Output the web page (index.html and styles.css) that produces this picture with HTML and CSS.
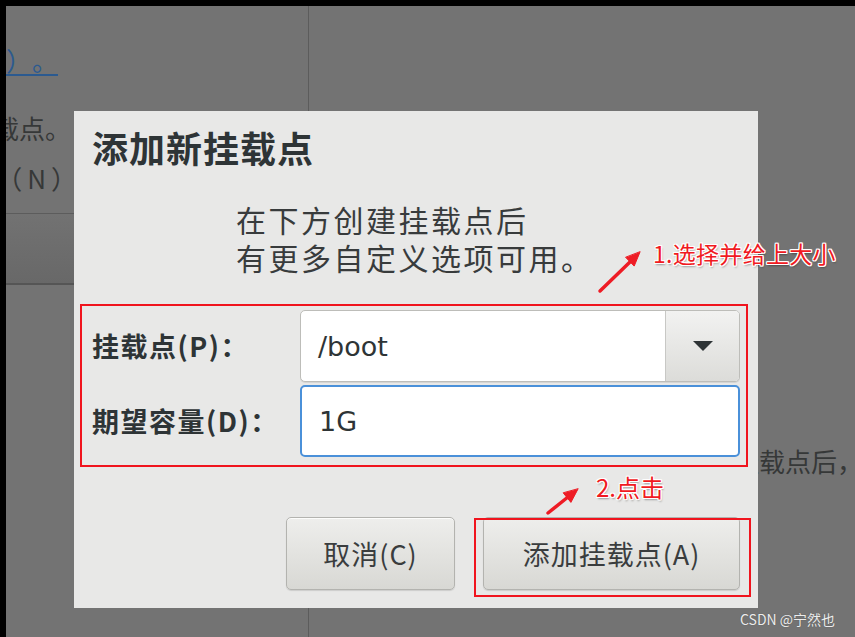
FILE: index.html
```html
<!DOCTYPE html>
<html lang="zh-CN">
<head>
<meta charset="utf-8">
<title>添加新挂载点</title>
<link rel="stylesheet" href="styles.css">
</head>
<body>
  <div class="screen">
    <div class="left-pane">
      <div class="bg-line line-a"><span><a class="bg-link">点这里自动创建它们（C）。</a></span></div>
      <div class="bg-line line-b"><span>通过点击'+'按钮创建新挂载点。</span></div>
      <div class="bg-line line-c"><span class="paren">（N）</span></div>
      <div class="bg-combo"></div>
    </div>
    <div class="right-pane">
      <div class="bg-text">安装创建挂载点后，您可以在这里浏览它们的详细信息。</div>
    </div>
  </div>

  <div class="dialog">
    <h1 class="dialog-title">添加新挂载点</h1>
    <p class="dialog-desc">在下方创建挂载点后<br>有更多自定义选项可用。</p>
    <div class="mount-form">
      <label class="field-label">挂载点(P)：</label>
      <div class="combo">
        <span class="combo-value">/boot</span>
        <span class="combo-btn"><svg width="20" height="10" viewBox="0 0 20 10"><path d="M0 0H20L10 10Z" fill="#2e3436"/></svg></span>
      </div>
      <label class="field-label">期望容量(D)：</label>
      <div class="entry">1G</div>
    </div>
    <div class="actions">
      <button class="btn btn-cancel">取消(C)</button>
      <div class="primary-wrap"><button class="btn btn-add">添加挂载点(A)</button></div>
    </div>
  </div>

  <svg class="arrows" width="855" height="637" viewBox="0 0 855 637">
    <g stroke="#ee1c25" stroke-width="3.5" stroke-linecap="round" fill="#ee1c25">
      <line x1="600" y1="291" x2="631" y2="261"/>
      <polygon points="640,252 634.2,266.1 625.8,257.5" stroke-width="1"/>
      <line x1="548" y1="513" x2="568" y2="497"/>
      <polygon points="578,489 570.9,502.4 563.4,493.1" stroke-width="1"/>
    </g>
  </svg>
  <div class="note note-1">1.选择并给上大小</div>
  <div class="note note-2">2.点击</div>
  <div class="watermark">CSDN @宁然也</div>
</body>
</html>
```
FILE: styles.css
```css
html, body {
  margin: 0;
  padding: 0;
}
body {
  position: relative;
  width: 855px;
  height: 637px;
  overflow: hidden;
  background: #737373;
  font-family: "Noto Sans CJK SC", sans-serif;
  text-spacing-trim: space-all;
}

/* dimmed background page */
.screen {
  box-sizing: border-box;
  width: 855px;
  height: 637px;
  border-top: 6px solid #000;
  border-left: 6px solid #000;
  background: #737373;
  display: flex;
  color: #363838;
  font-size: 26px;
}
.left-pane {
  width: 302px;
  flex-shrink: 0;
  border-right: 1px solid #5c5c5c;
  overflow: hidden;
  display: flex;
  flex-direction: column;
}
.bg-line {
  display: flex;
  justify-content: flex-end;
  white-space: nowrap;
  line-height: 30px;
  height: 30px;
}
.bg-line span {
  flex-shrink: 0;
}
.line-a {
  width: 52px;
  margin-top: 39px;
}
.bg-link {
  color: #2b5a90;
  text-decoration: underline;
  text-decoration-thickness: 2px;
  text-underline-offset: 3px;
}
.line-b {
  width: 65px;
  margin-top: 38px;
}
.line-c {
  width: 76px;
  margin-top: 20px;
}
.paren {
  letter-spacing: 5px;
}
.bg-combo {
  margin-top: 20px;
  height: 72px;
  box-sizing: border-box;
  border-top: 1px solid #5c5c5c;
  border-bottom: 2px solid #555;
  background: linear-gradient(#727272, #686868);
}
.right-pane {
  flex: 1;
  overflow: hidden;
}
.bg-text {
  margin-top: 440px;
  padding-left: 320px;
  white-space: nowrap;
  line-height: 30px;
}

/* dialog */
.dialog {
  position: absolute;
  left: 74px;
  top: 111px;
  width: 684px;
  height: 497px;
  box-sizing: border-box;
  padding: 14px 10px 0 6px;
  background: #e8e8e7;
  display: flex;
  flex-direction: column;
  color: #2e3436;
}
.dialog-title {
  margin: 0 0 0 12px;
  font-size: 36px;
  line-height: 44px;
  font-weight: 700;
  letter-spacing: 1px;
}
.dialog-desc {
  margin: 31px 0 0 156px;
  font-size: 30px;
  line-height: 38px;
  letter-spacing: 2.5px;
  color: #383b3c;
}
.mount-form {
  margin-top: 28px;
  border: 2px solid #f0141e;
  padding: 4px 6px 8px 10px;
  display: grid;
  grid-template-columns: 208px 1fr;
  grid-auto-rows: 72px;
  row-gap: 3px;
}
.field-label {
  align-self: center;
  font-size: 27px;
  font-weight: 700;
  letter-spacing: 1.5px;
  line-height: 36px;
  white-space: nowrap;
}
.combo {
  display: flex;
  box-sizing: border-box;
  border: 1px solid #bdbdb9;
  border-radius: 5px;
  overflow: hidden;
  background: #fff;
  box-shadow: 0 1px 0 rgba(0,0,0,0.08);
}
.combo-value, .entry {
  font-family: "DejaVu Sans", sans-serif;
  font-size: 27px;
  color: #2e3436;
}
.combo-value {
  flex: 1;
  display: flex;
  align-items: center;
  padding-left: 17px;
}
.combo-btn {
  width: 73px;
  border-left: 1px solid #c8c8c5;
  background: linear-gradient(#f2f2f1, #dcdcd9);
  display: flex;
  align-items: center;
  justify-content: center;
}
.entry {
  box-sizing: border-box;
  border: 2px solid #4a90d9;
  border-radius: 5px;
  background: #fff;
  display: flex;
  align-items: center;
  padding-left: 17px;
}
.actions {
  margin-top: 50px;
  display: flex;
  justify-content: flex-end;
  gap: 28px;
  padding-right: 8px;
}
.btn {
  height: 73px;
  box-sizing: border-box;
  border: 1px solid #b3b3af;
  border-radius: 5px;
  background: linear-gradient(#eeeeec, #d8d8d4);
  box-shadow: inset 0 1px 0 rgba(255,255,255,0.8), 0 1px 1px rgba(0,0,0,0.12);
  font-family: "Noto Sans CJK SC", sans-serif;
  font-size: 27px;
  letter-spacing: 1px;
  color: #3a3d3e;
  padding: 0;
}
.btn-cancel {
  width: 169px;
}
.btn-add {
  width: 257px;
  display: block;
}
.primary-wrap {
  position: relative;
}
.primary-wrap::after {
  content: "";
  position: absolute;
  left: -9px;
  right: -11px;
  top: 1px;
  bottom: -7px;
  border: 2px solid #f0141e;
  pointer-events: none;
}

/* annotations */
.arrows {
  position: absolute;
  left: 0;
  top: 0;
  pointer-events: none;
}
.note {
  position: absolute;
  color: #f01a22;
  white-space: nowrap;
  text-shadow: 1px 0 #fff, -1px 0 #fff, 0 1px #fff, 0 -1px #fff,
    1px 1px #fff, -1px -1px #fff, 1px -1px #fff, -1px 1px #fff,
    1px 2px 2px rgba(0,0,0,0.35);
}
.note-1 {
  left: 653px;
  top: 242px;
  font-size: 23px;
  line-height: 23px;
  letter-spacing: 0.3px;
}
.note-2 {
  left: 596px;
  top: 475px;
  font-size: 24px;
  line-height: 24px;
}
.watermark {
  position: absolute;
  left: 740px;
  top: 612px;
  font-size: 14px;
  line-height: 14px;
  color: #ececec;
  white-space: nowrap;
  text-shadow: 0 0 1px rgba(0,0,0,0.35);
}
```
